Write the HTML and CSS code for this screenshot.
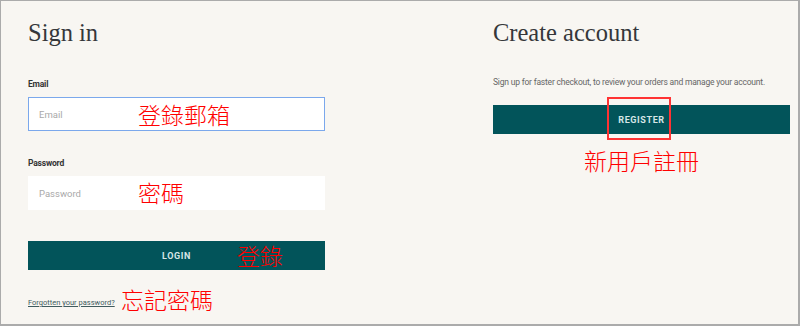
FILE: index.html
```html
<!DOCTYPE html>
<html lang="zh-Hant">

<head>
    <meta charset="UTF-8">
    <meta name="viewport" content="width=device-width, initial-scale=1.0">
    <title>Sign in</title>
    <link rel="stylesheet" href="styles.css">
</head>

<body>
    <div class="page">
        <!-- Sign in -->
        <div class="col">
            <h1>Sign in</h1>

            <label class="label" for="email">Email</label>
            <div class="field">
                <input class="input focused" id="email" type="text" placeholder="Email">
                <span class="note note-email">登錄郵箱</span>
            </div>

            <label class="label label-pass" for="password">Password</label>
            <div class="field">
                <input class="input" id="password" type="password" placeholder="Password">
                <span class="note note-pass">密碼</span>
            </div>

            <div class="field btn-wrap">
                <button class="btn">LOGIN</button>
                <span class="note note-login">登錄</span>
            </div>

            <div class="field forgot">
                <a href="#" class="link">Forgotten your password?</a>
                <span class="note note-forgot">忘記密碼</span>
            </div>
        </div>

        <!-- Create account -->
        <div class="col">
            <h1>Create account</h1>
            <p class="intro">Sign up for faster checkout, to review your orders and manage your account.</p>
            <div class="field register">
                <button class="btn">REGISTER</button>
                <span class="mark"></span>
                <span class="note note-register">新用戶註冊</span>
            </div>
        </div>
    </div>
</body>

</html>
```

FILE: styles.css
```css
* {
    box-sizing: border-box;
}

body {
    margin: 0;
    background-color: #f8f6f2;
}

.page {
    height: 326px;
    border: solid #ababab;
    border-width: 1px 2px 2px 1px;
    display: grid;
    grid-template-columns: 297px 297px;
    justify-content: space-between;
    padding: 17px 8px 0 27px;
    font-family: Roboto, "Liberation Sans", sans-serif;
}

.col {
    display: flex;
    flex-direction: column;
}

h1 {
    margin: 0;
    font-family: "Liberation Serif", serif;
    font-weight: normal;
    font-size: 24.5px;
    line-height: 30px;
    color: #35373a;
}

.label {
    margin-top: 30px;
    font-size: 8.5px;
    line-height: 12px;
    font-weight: bold;
    color: #333;
    letter-spacing: -0.2px;
}

.label-pass {
    margin-top: 26px;
}

.field {
    position: relative;
    margin-top: 7px;
}

.input {
    display: block;
    width: 100%;
    height: 34px;
    border: 1px solid #fff;
    background-color: #fff;
    padding: 0 10px;
    font-family: Roboto, sans-serif;
    font-size: 9.5px;
    outline: none;
}

.input::placeholder {
    color: #a9a9a9;
}

.input.focused {
    border-color: #7ba8ec;
}

.btn-wrap {
    margin-top: 31px;
}

.btn {
    display: block;
    width: 100%;
    height: 29px;
    border: none;
    background-color: #02545a;
    color: #d6e6e6;
    font-family: Roboto, sans-serif;
    font-weight: bold;
    font-size: 9px;
    letter-spacing: 0.6px;
}

.forgot {
    margin-top: 25px;
    line-height: 10px;
}

.link {
    font-size: 7.5px;
    color: #3f5b5e;
}

.intro {
    margin: 28px 0 0;
    font-size: 8.5px;
    line-height: 12px;
    color: #666;
    letter-spacing: -0.2px;
    white-space: nowrap;
}

.register {
    margin-top: 17px;
}

.note {
    position: absolute;
    font-family: "Noto Sans CJK TC", sans-serif;
    font-weight: 300;
    font-size: 23px;
    line-height: 23px;
    color: #f00;
    white-space: nowrap;
}

.note-email {
    left: 110px;
    top: 6px;
}

.note-pass {
    left: 110px;
    top: 5px;
}

.note-login {
    left: 209px;
    top: 3px;
}

.note-forgot {
    left: 93px;
    top: -7px;
}

.note-register {
    left: 91px;
    top: 44px;
}

.mark {
    position: absolute;
    left: 114px;
    top: -8px;
    width: 64px;
    height: 43px;
    border: 2px solid #f33;
}
```
